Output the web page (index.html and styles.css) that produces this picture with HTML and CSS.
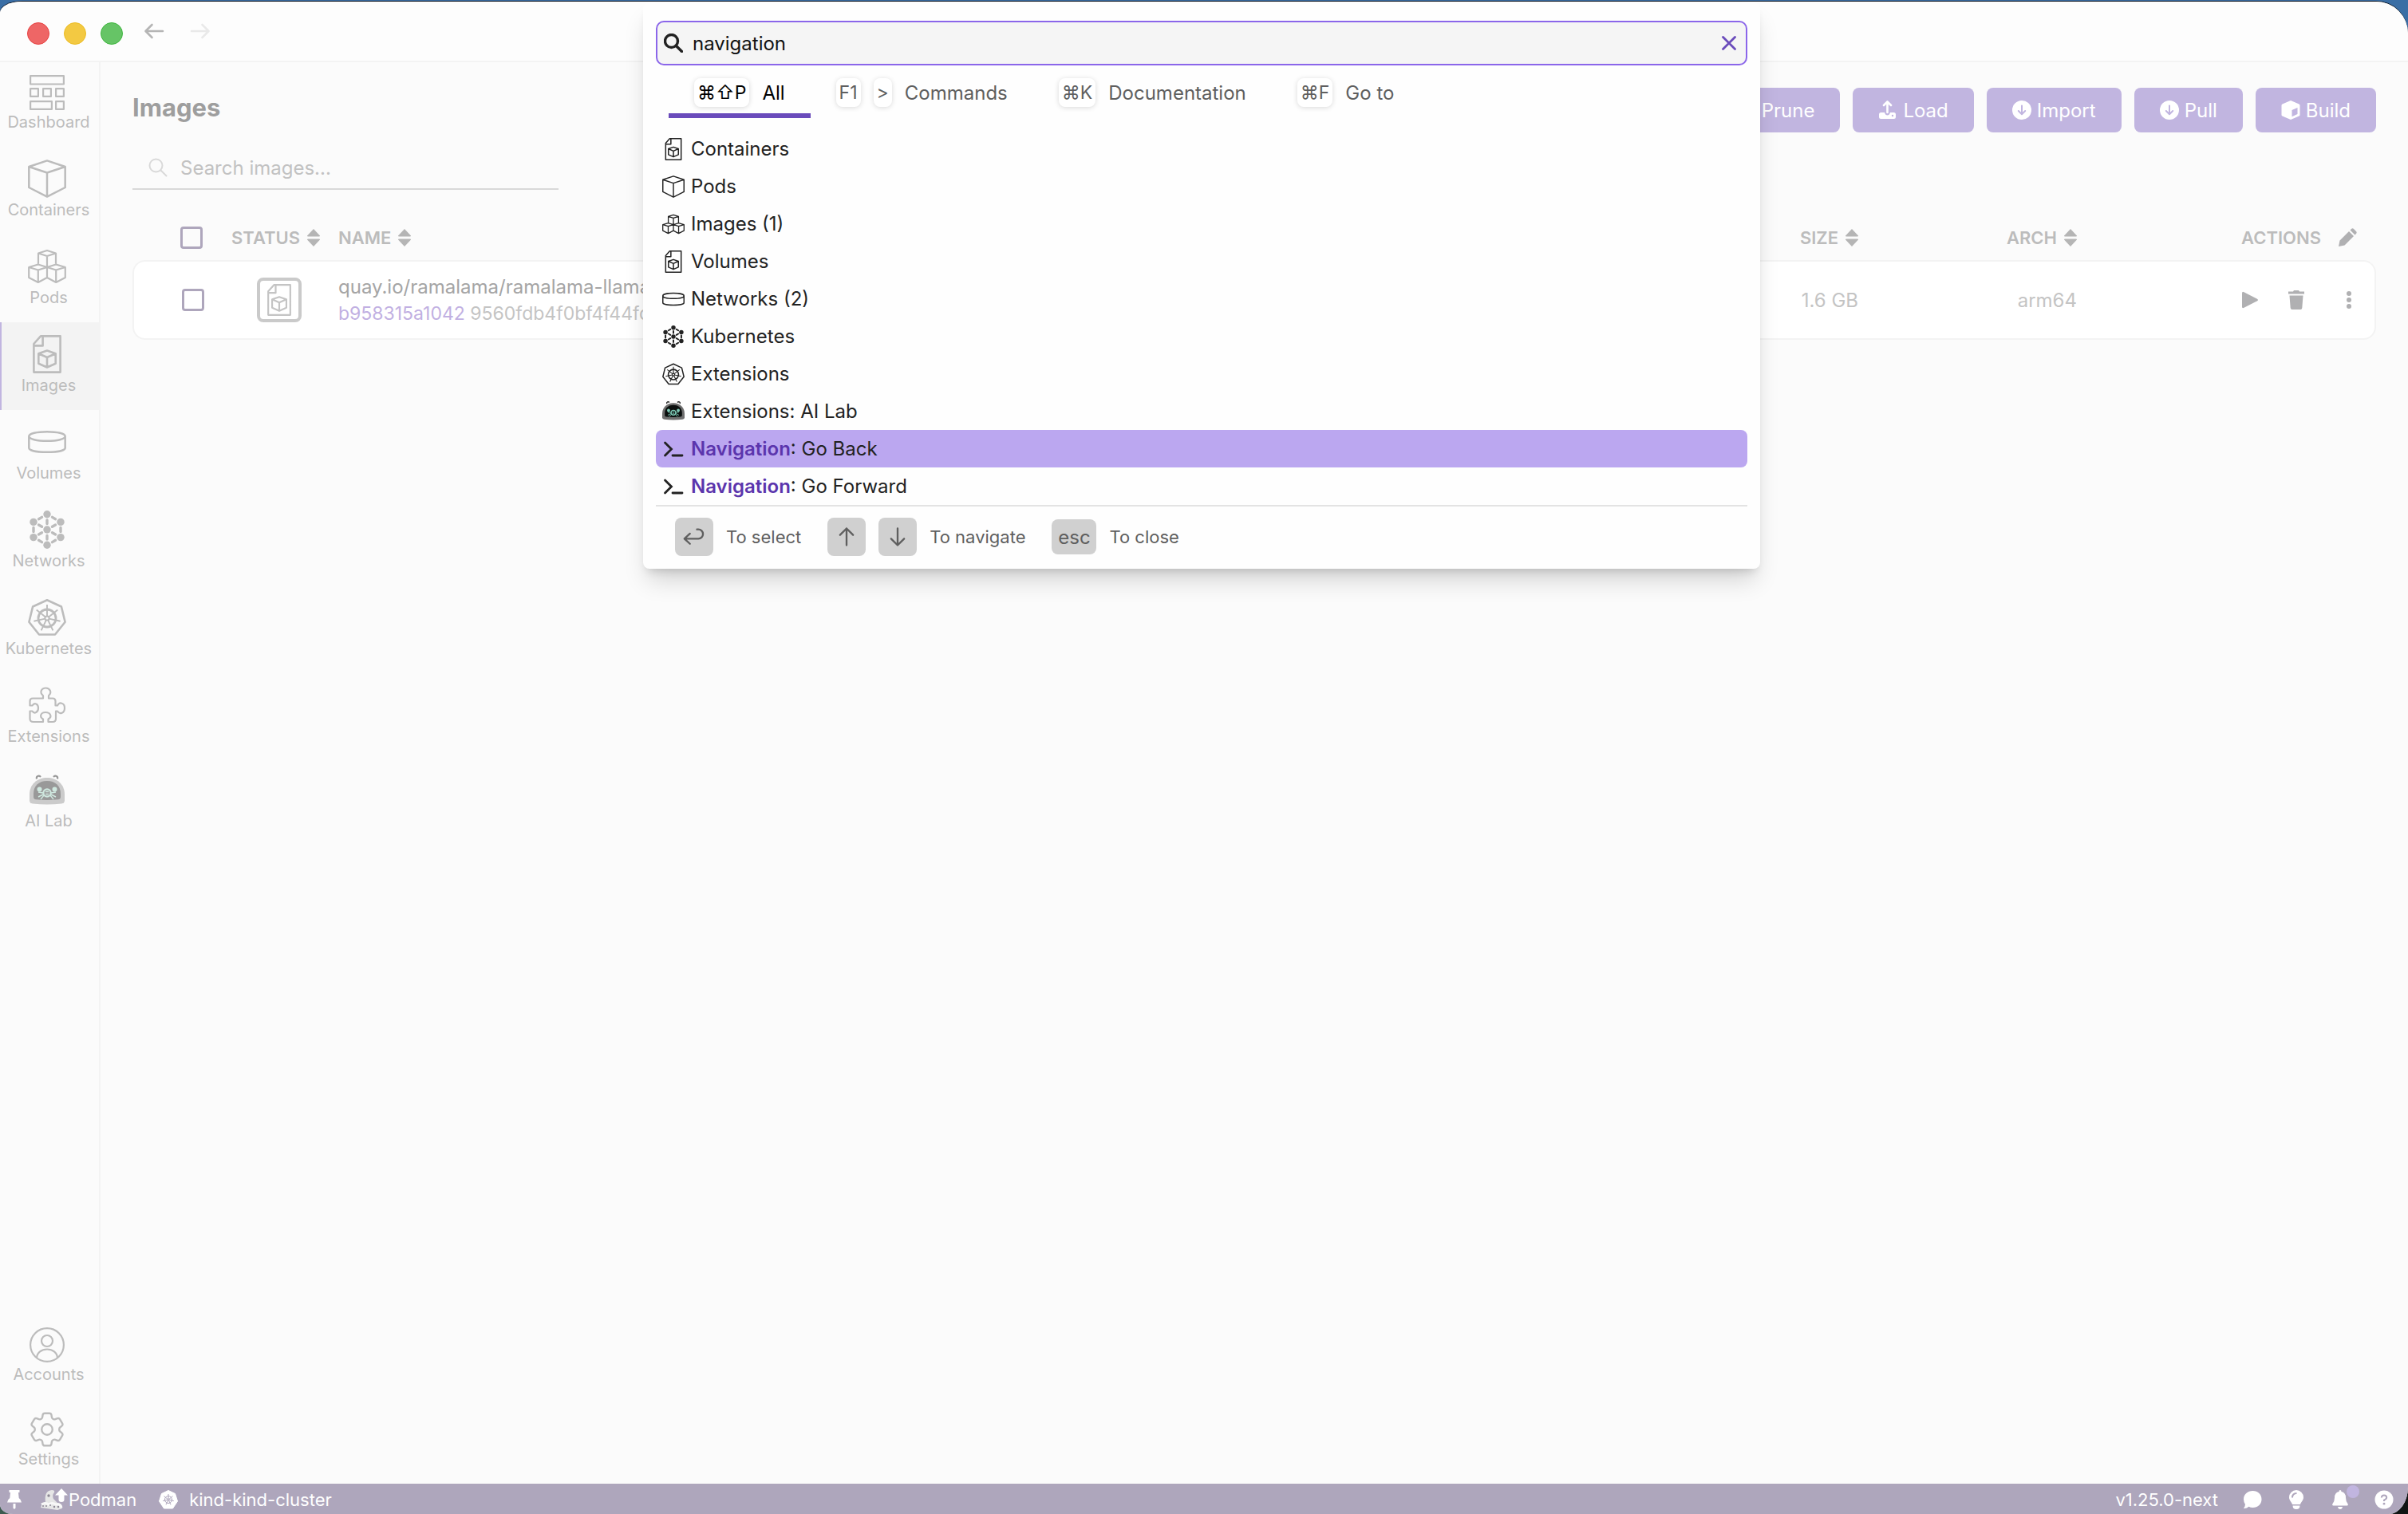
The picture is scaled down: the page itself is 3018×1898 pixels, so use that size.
FILE: index.html
```
<!DOCTYPE html>
<html lang="en">
<head>
  <meta charset="UTF-8">
  <meta name="viewport" content="width=device-width, initial-scale=1">
  <title>Podman Desktop</title>
  <link rel="stylesheet" href="styles.css">
</head>
<body>
  <!-- Icon sprite -->
  <svg class="sprite" aria-hidden="true">
    <symbol id="i-dashboard" viewBox="0 0 44 44">
      <g fill="none" stroke="currentColor" stroke-width="2.2" stroke-linejoin="round">
        <rect x="1.1" y="1.1" width="41.8" height="10.4"/>
        <rect x="1.1" y="17.1" width="9.8" height="9.8"/><rect x="17.1" y="17.1" width="9.8" height="9.8"/><rect x="33.1" y="17.1" width="9.8" height="9.8"/>
        <rect x="1.1" y="33.1" width="26.8" height="9.8"/><rect x="33.1" y="33.1" width="9.8" height="9.8"/>
      </g>
    </symbol>
    <symbol id="i-cube" viewBox="0 0 48 48">
      <path d="M24 1.4 46.7 9v26L24 46.6 1.3 35V9ZM1.3 9 24 16.5 46.7 9M24 16.5v30" fill="none" stroke="currentColor" stroke-width="2.5" stroke-linejoin="round"/>
    </symbol>
    <symbol id="i-pods" viewBox="0 0 48 48">
      <path d="M13 20.5V7.5L24 4l11 3.5v13M13 7.5 24 11l11-3.5M24 11v14M1.2 25l11.6-3.5L24 25v13l-11.2 6L1.2 38ZM1.2 25l11.6 3.5L24 25M12.8 28.5V44M24 25l11.2-3.5L46.8 25v13l-11.6 6L24 38M24 25l11.2 3.5L46.8 25M35.2 28.5V44" fill="none" stroke="currentColor" stroke-width="2.2" stroke-linejoin="round"/>
    </symbol>
    <symbol id="i-image" viewBox="0 0 48 48">
      <path d="M16 1.4h24.6v45.2H7.4V11ZM7.4 13.4h11.2V1.4M24 19.5l10.7 3.7v12.5L24 40.5l-10.7-4.8V23.2ZM13.3 23.2 24 28l10.7-4.8M24 28v12.5" fill="none" stroke="currentColor" stroke-width="2.6" stroke-linejoin="round"/>
    </symbol>
    <symbol id="i-volume" viewBox="0 0 48 48">
      <path d="M1.3 17c0-3.5 10-5.7 22.7-5.7s22.7 2.2 22.7 5.7S36.7 22.7 24 22.7 1.3 20.5 1.3 17v14.5c0 3.2 10 5.3 22.7 5.3s22.7-2.1 22.7-5.3V17" fill="none" stroke="currentColor" stroke-width="2.5"/>
    </symbol>
    <symbol id="i-network" viewBox="0 0 48 48">
      <g fill="currentColor"><circle cx="24" cy="4.7" r="4.7"/><circle cx="7" cy="14.4" r="4.7"/><circle cx="41" cy="14.4" r="4.7"/><circle cx="24" cy="24" r="4.7"/><circle cx="7" cy="33.6" r="4.7"/><circle cx="41" cy="33.6" r="4.7"/><circle cx="24" cy="43.3" r="4.7"/></g>
      <path d="M13.5 10.7l4-2.3M34.5 10.7l-4-2.3M13.5 37.3l4 2.3M34.5 37.3l-4 2.3M7 21.5v5M41 21.5v5M24 12v4.5M24 31.5V36M13.5 18l4 2.3M34.5 18l-4 2.3M13.5 30l4-2.3M34.5 30l-4-2.3" stroke="currentColor" stroke-width="3.4" stroke-linecap="round"/>
    </symbol>
    <symbol id="i-kube" viewBox="0 0 48 48">
      <g fill="none" stroke="currentColor">
        <path d="M24 2.2 41.9 10.5 46.6 29.7 34 45.5H14L1.4 29.7 6.1 10.5Z" stroke-width="2.6" stroke-linejoin="round"/>
        <circle cx="24" cy="25" r="11" stroke-width="2.8"/>
        <circle cx="24" cy="25" r="2.6" stroke-width="2"/>
        <path d="M24 22.4V8M26 23.4 37.3 14.4M26.5 25.6 40.6 28.8M25.1 27.3 31.4 40.3M22.9 27.3 16.6 40.3M21.5 25.6 7.4 28.8M22 23.4 10.7 14.4" stroke-width="1.9"/>
      </g>
    </symbol>
    <symbol id="i-puzzle" viewBox="0 0 48 48">
      <path d="M19 15.5V12C14 8 17 2.5 22.3 2.5S30.5 8 26 12v3.5h5q3.5 0 3.5 3.5v5.5H37c2.5-5 9-3.5 9 3s-6 9-9 4h-2V41q0 4-4 4h-5.5v-3.5C31 38.5 28 33 22 33s-8 5.5-3 8.500V45H7q-4.5 0-4.5-4v-9.5h3c2.5 4 7.5 1.5 7.5-4s-5-7-7.5-3h-3V19q0-3.5 3.5-3.5Z" fill="none" stroke="currentColor" stroke-width="2.2" stroke-linejoin="round"/>
    </symbol>
    <symbol id="i-ailab" viewBox="0 0 44 44">
      <path d="M9 6.5C8 3 12 1.5 14 4M35 6.5C36 3 32 1.5 30 4" fill="none" stroke="var(--ear)" stroke-width="2.2"/>
      <path d="M0 26C0 13 10 5 22 5s22 8 22 21v7.5q0 3.5-4 4Q22 39.5 4 37.5q-4-.5-4-4Z" fill="var(--shell)"/>
      <path d="M5 25C5 15 12 9 22 9s17 6 17 16v4q0 3-3 3.3-14 1.2-28 0-3-.3-3-3.3Z" fill="var(--visor)"/>
      <g stroke="var(--glow)" fill="none" stroke-width="1.4"><circle cx="22" cy="24" r="4.6" stroke-width="2.2"/><path d="M20 22.5h4M20 25.5h4M17 24l-6-1M17 26l-6 3M18 27l-4 5M27 24l6-1M27 26l6 3M26 27l4 5"/></g>
      <circle cx="12.5" cy="19.5" r="3" fill="var(--glow)"/><circle cx="31.5" cy="19.5" r="3" fill="var(--glow)"/>
    </symbol>
    <symbol id="i-account" viewBox="0 0 44 44">
      <g fill="none" stroke="currentColor" stroke-width="2.2"><circle cx="22" cy="22" r="20.9"/><circle cx="22" cy="17" r="7"/><path d="M9 38c.5-6.5 6-10.5 13-10.5S34.500 31.5 35 38"/></g>
    </symbol>
    <symbol id="i-gear" viewBox="2.25 2.25 19.5 19.5">
      <g fill="none" stroke="currentColor" stroke-width="1.05"><path d="M9.594 3.94c.09-.542.56-.94 1.11-.94h2.593c.55 0 1.02.398 1.11.94l.213 1.281c.063.374.313.686.645.87.074.04.147.083.22.127.325.196.72.257 1.075.124l1.217-.456a1.125 1.125 0 0 1 1.37.49l1.296 2.247a1.125 1.125 0 0 1-.26 1.431l-1.003.827c-.293.241-.438.613-.43.992a7.723 7.723 0 0 1 0 .255c-.008.378.137.75.43.991l1.004.827c.424.35.534.955.26 1.43l-1.298 2.247a1.125 1.125 0 0 1-1.369.491l-1.217-.456c-.355-.133-.75-.072-1.076.124a6.47 6.47 0 0 1-.22.128c-.331.183-.581.495-.644.869l-.213 1.281c-.09.543-.56.94-1.11.94h-2.594c-.55 0-1.019-.398-1.11-.94l-.213-1.281c-.062-.374-.312-.686-.644-.87a6.52 6.52 0 0 1-.22-.127c-.325-.196-.72-.257-1.076-.124l-1.217.456a1.125 1.125 0 0 1-1.369-.49l-1.297-2.247a1.125 1.125 0 0 1 .26-1.431l1.004-.827c.292-.24.437-.613.43-.991a6.932 6.932 0 0 1 0-.255c.007-.38-.138-.751-.43-.992l-1.004-.827a1.125 1.125 0 0 1-.26-1.43l1.297-2.247a1.125 1.125 0 0 1 1.37-.491l1.216.456c.356.133.751.072 1.076-.124.072-.044.146-.086.22-.128.332-.183.582-.495.644-.869l.214-1.28Z"/><circle cx="12" cy="12" r="3"/></g>
    </symbol>
    <symbol id="i-search" viewBox="0 0 24 24">
      <circle cx="9.5" cy="9.5" r="8" fill="none" stroke="currentColor" stroke-width="var(--sw)"/><path d="M15.5 15.5 22.5 22.5" stroke="currentColor" stroke-width="var(--sw)" stroke-linecap="round"/>
    </symbol>
    <symbol id="i-arrow" viewBox="0 0 24 24">
      <path d="M23 12H2M9.5 4 1.5 12l8 8" fill="none" stroke="currentColor" stroke-width="var(--sw)" stroke-linecap="round" stroke-linejoin="round"/>
    </symbol>
    <symbol id="i-sort" viewBox="0 0 16 22">
      <path d="M8 0 16 8.5q.3 1-1 1H1q-1.3 0-1-1ZM8 22l8-8.500q.3-1-1-1H1q-1.3 0-1 1Z" fill="currentColor"/>
    </symbol>
    <symbol id="i-prompt" viewBox="0 0 28 28">
      <path d="M3.5 6 11.500 14l-8 8M13 22h12" fill="none" stroke="currentColor" stroke-width="2.8" stroke-linecap="round"/>
    </symbol>
    <symbol id="i-down" viewBox="0 0 24 24">
      <circle cx="12" cy="12" r="12" fill="currentColor"/>
      <path d="M12 6.500v10.500M7.800 13l4.200 4.200 4.200-4.200" fill="none" stroke="#c1b5e0" stroke-width="2" stroke-linecap="round" stroke-linejoin="round"/>
    </symbol>
  </svg>

  <div class="window">
    <header class="titlebar">
      <span class="light red"></span>
      <span class="light yellow"></span>
      <span class="light green"></span>
      <button class="nav-arrow" aria-label="Back"><svg><use href="#i-arrow"/></svg></button>
      <button class="nav-arrow forward" aria-label="Forward"><svg><use href="#i-arrow"/></svg></button>
    </header>

    <div class="body">
      <nav class="sidebar">
        <a href="#" class="nav-item small"><svg><use href="#i-dashboard"/></svg><span>Dashboard</span></a>
        <a href="#" class="nav-item"><svg><use href="#i-cube"/></svg><span>Containers</span></a>
        <a href="#" class="nav-item"><svg><use href="#i-pods"/></svg><span>Pods</span></a>
        <a href="#" class="nav-item active"><svg><use href="#i-image"/></svg><span>Images</span></a>
        <a href="#" class="nav-item"><svg><use href="#i-volume"/></svg><span>Volumes</span></a>
        <a href="#" class="nav-item"><svg><use href="#i-network"/></svg><span>Networks</span></a>
        <a href="#" class="nav-item"><svg><use href="#i-kube"/></svg><span>Kubernetes</span></a>
        <a href="#" class="nav-item"><svg><use href="#i-puzzle"/></svg><span>Extensions</span></a>
        <a href="#" class="nav-item small"><svg><use href="#i-ailab"/></svg><span>AI Lab</span></a>
        <div class="spacer"></div>
        <a href="#" class="nav-item small"><svg><use href="#i-account"/></svg><span>Accounts</span></a>
        <a href="#" class="nav-item small"><svg><use href="#i-gear"/></svg><span>Settings</span></a>
      </nav>

      <main class="page">
        <div class="page-header">
          <h1>Images</h1>
          <div class="actions">
            <button class="btn">Prune</button>
            <button class="btn"><svg viewBox="0 0 24 24"><path d="M11.5 15V2M7 6l4.500-4.500L16 6" fill="none" stroke="currentColor" stroke-width="2.6" stroke-linecap="round" stroke-linejoin="round"/><path d="M3.500 15H8q1 3.500 3.500 3.500T15 15h4.500q2.500 0 2.500 2.500v3q0 2.500-2.500 2.500h-16Q1 23 1 20.500v-3Q1 15 3.500 15Z" fill="currentColor"/><circle cx="18" cy="19" r="1.200" fill="#c1b5e0"/></svg>Load</button>
            <button class="btn"><svg><use href="#i-down"/></svg>Import</button>
            <button class="btn"><svg><use href="#i-down"/></svg>Pull</button>
            <button class="btn"><svg viewBox="0 0 24 24"><path fill-rule="evenodd" d="M12 0 22.5 4.500q1 .5 1 1.500v12q0 1-1 1.500L12 24 1.500 19.500q-1-.5-1-1.500V6q0-1 1-1.500ZM13.500 12v8.200l7-3.200V9Z" fill="currentColor"/></svg>Build</button>
          </div>
        </div>

        <label class="search">
          <svg><use href="#i-search"/></svg>
          <input type="text" placeholder="Search images..." aria-label="Search images">
        </label>

        <table class="images">
          <colgroup>
            <col class="c-check"><col class="c-status"><col><col class="c-size"><col class="c-arch"><col class="c-actions">
          </colgroup>
          <thead>
            <tr>
              <th class="check"><input type="checkbox" aria-label="Select all"></th>
              <th>STATUS<svg class="sort"><use href="#i-sort"/></svg></th>
              <th>NAME<svg class="sort"><use href="#i-sort"/></svg></th>
              <th class="right">SIZE<svg class="sort"><use href="#i-sort"/></svg></th>
              <th class="right">ARCH<svg class="sort"><use href="#i-sort"/></svg></th>
              <th class="right last">ACTIONS<svg class="pencil" viewBox="0 0 24 24"><path d="M1 23 2.500 15.500 14 4l6 6L8.500 21.500ZM15.500 2.500 17 1q1.500-1.300 3 0l3 3q1.300 1.500 0 3l-1.500 1.500Z" fill="currentColor"/></svg></th>
            </tr>
          </thead>
          <tbody>
            <tr>
              <td class="check"><input type="checkbox" aria-label="Select image"></td>
              <td><span class="status"><svg><use href="#i-image"/></svg></span></td>
              <td>
                <div class="name">quay.io/ramalama/ramalama-llama</div>
                <div class="digest"><span class="id">b958315a1042</span> 9560fdb4f0bf4f44fd</div>
              </td>
              <td class="right">1.6 GB</td>
              <td class="right">arm64</td>
              <td class="last">
                <div class="row-actions">
                  <button aria-label="Run"><svg viewBox="0 0 24 24"><path d="M2 3.500Q2 1 4.500 2.200L21 10.700q2 1.300 0 2.600L4.500 21.800Q2 23 2 20.500Z" fill="currentColor"/></svg></button>
                  <button aria-label="Delete"><svg viewBox="0 0 24 24"><path d="M9 0h6l1 1.500h6V4.500H2V1.500h6ZM3.500 6.500h17L19.300 22q-.2 2-2 2H6.700q-1.800 0-2-2Z" fill="currentColor"/></svg></button>
                  <button class="more" aria-label="More"><svg viewBox="0 0 24 24"><g fill="currentColor"><circle cx="12" cy="4" r="3"/><circle cx="12" cy="12" r="3"/><circle cx="12" cy="20" r="3"/></g></svg></button>
                </div>
              </td>
            </tr>
          </tbody>
        </table>
      </main>
    </div>

    <footer class="statusbar">
      <button class="pin" aria-label="Pin"><svg viewBox="0 0 24 24"><path d="M5.500 0h13v3h-1.500l.7 7q3 2 3.300 5.500H3Q3.300 12 6.300 10L7 3H5.500ZM10.500 17h3v5.500L12 24l-1.500-1.500Z" fill="currentColor"/></svg></button>
      <button class="provider">
        <svg viewBox="0 0 36 28">
          <path d="M1 24Q3 17 7 17 5 3 15 2q4 0 3 3-3 3-1 8 3 3 5 5 5 0 6 7l-6 2Z" fill="#e6e6e6"/>
          <path d="M2 20q5-3 9 0 4-3 9 0 6-1 7 4" fill="none" stroke="#f8f8f8" stroke-width="3"/>
          <g fill="#8c8794"><circle cx="11" cy="9" r="1.700"/><circle cx="4" cy="22" r="1"/><circle cx="8" cy="22" r="1"/><circle cx="13" cy="21" r="1"/><circle cx="18" cy="23" r="1.200"/><circle cx="23" cy="23" r="1.200"/></g>
          <path d="M27 0 35 8.500h-4.500V14q0 3-3.500 3t-3.500-3V8.500H19Z" fill="#fff"/>
        </svg>Podman
      </button>
      <button class="context">
        <svg viewBox="0 0 24 24"><path d="M12 .5 20.500 4.500 23.500 14 17.500 23h-11L.5 14 3.500 4.500Z" fill="#fff" stroke="#fff" stroke-linejoin="round"/><g fill="none" stroke="#aea6bc" stroke-width="1"><circle cx="12" cy="12" r="4.500"/><circle cx="12" cy="12" r="1"/><path d="M12 5v6M17.500 7.600 13 11.300M18.800 13.600 13 12.200M15 18.300 12.500 13M9 18.300 11.500 13M5.200 13.600 11 12.200M6.500 7.600 11 11.300"/></g></svg>kind-kind-cluster
      </button>
      <span class="spacer"></span>
      <span class="version">v1.25.0-next</span>
      <button class="tool" aria-label="Feedback"><svg viewBox="0 0 24 24"><path d="M12.500 1C19 1 23.500 5.500 23.500 11.500S19 22 12.500 22q-3 0-5-1.200Q4.500 23.500 .8 23q2-2 2.200-5Q1 15 1 11.500C1 5.500 6 1 12.500 1Z" fill="currentColor"/></svg></button>
      <button class="tool" aria-label="Tips"><svg viewBox="0 0 24 24"><path fill-rule="evenodd" d="M12 0a9 9 0 0 1 9 9c0 4-3 5.500-4 9H7C6 14.500 3 13 3 9a9 9 0 0 1 9-9ZM6 9.500h2Q8 5 12.500 5V3Q6 3 6 9.500ZM7.500 19.500h9q0 4.500-4.500 4.500t-4.500-4.500Z" fill="currentColor"/></svg></button>
      <button class="tool" aria-label="Notifications"><svg viewBox="0 0 24 24"><path d="M12 0q1.500 0 1.500 2Q19 3 19 9.500q0 5 2.700 8 .7 2-1 2H3.300q-1.700 0-1-2Q5 14.500 5 9.500 5 3 10.500 2 10.500 0 12 0ZM9 21h6q-.5 3-3 3t-3-3Z" fill="currentColor"/></svg><span class="dot"></span></button>
      <button class="tool" aria-label="Help"><svg viewBox="0 0 24 24"><circle cx="12" cy="12" r="11.500" fill="currentColor"/><path d="M8.800 9.500Q9 6.500 12 6.500t3.200 2.800Q15.200 11 12 12.700V14" fill="none" stroke="#aea6bc" stroke-width="2"/><circle cx="12" cy="17.200" r="1.400" fill="#aea6bc"/></svg></button>
    </footer>
  </div>

  <div class="palette" role="dialog" aria-label="Command palette">
    <label class="palette-input">
      <svg><use href="#i-search"/></svg>
      <input type="text" value="navigation" aria-label="Search">
      <button aria-label="Clear"><svg viewBox="0 0 18 18"><path d="M1.500 1.500l15 15M16.500 1.500l-15 15" stroke="currentColor" stroke-width="2.800" stroke-linecap="round"/></svg></button>
    </label>

    <div class="tabs">
      <button class="tab selected"><kbd>⌘⇧P</kbd>All</button>
      <button class="tab"><kbd>F1</kbd><kbd>&gt;</kbd>Commands</button>
      <button class="tab"><kbd>⌘K</kbd>Documentation</button>
      <button class="tab"><kbd>⌘F</kbd>Go to</button>
    </div>

    <ul class="results">
      <li><button><svg><use href="#i-image"/></svg>Containers</button></li>
      <li><button><svg><use href="#i-cube"/></svg>Pods</button></li>
      <li><button><svg><use href="#i-pods"/></svg>Images (1)</button></li>
      <li><button><svg><use href="#i-image"/></svg>Volumes</button></li>
      <li><button><svg><use href="#i-volume"/></svg>Networks (2)</button></li>
      <li><button><svg><use href="#i-network"/></svg>Kubernetes</button></li>
      <li><button><svg><use href="#i-kube"/></svg>Extensions</button></li>
      <li><button><svg><use href="#i-ailab"/></svg>Extensions: AI Lab</button></li>
      <li><button class="selected"><svg><use href="#i-prompt"/></svg><span><mark>Navigation</mark>: Go Back</span></button></li>
      <li><button><svg><use href="#i-prompt"/></svg><span><mark>Navigation</mark>: Go Forward</span></button></li>
    </ul>

    <div class="hints">
      <div class="hint"><span class="key"><svg viewBox="0 0 24 24"><path d="M7.500 8.500 1.500 14l6 5.500M2 14h14.500a5 5 0 0 0 0-10H15" fill="none" stroke="currentColor" stroke-width="2" stroke-linecap="round" stroke-linejoin="round"/></svg></span>To select</div>
      <div class="hint"><span class="key"><svg viewBox="0 0 24 24"><path d="M12 21V3M5 10l7-7 7 7" fill="none" stroke="currentColor" stroke-width="2" stroke-linecap="round" stroke-linejoin="round"/></svg></span><span class="key"><svg viewBox="0 0 24 24"><path d="M12 3v18M5 14l7 7 7-7" fill="none" stroke="currentColor" stroke-width="2" stroke-linecap="round" stroke-linejoin="round"/></svg></span>To navigate</div>
      <div class="hint"><span class="key esc">esc</span>To close</div>
    </div>
  </div>
</body>
</html>
```
FILE: styles.css
```
* {
  box-sizing: border-box;
}
body {
  margin: 0;
  height: 100vh;
  padding-top: 2px;
  font-family: Inter, "Noto Sans", sans-serif;
  font-size: 24px;
  color: #bcbcbc;
  background: linear-gradient(to bottom, #3a6ea5 50%, transparent 50%),
    linear-gradient(to right, #3c5b50, #101514);
  background-size: 100% 200px, 100% 100%;
  background-repeat: no-repeat;
}
button {
  margin: 0;
  padding: 0;
  border: none;
  background: none;
  font: inherit;
  color: inherit;
  display: flex;
  align-items: center;
  cursor: pointer;
}
input {
  font: inherit;
  border: none;
  outline: none;
  background: none;
  padding: 0;
}
a {
  color: inherit;
  text-decoration: none;
}
svg {
  display: block;
  flex: none;
}
.sprite {
  position: absolute;
  width: 0;
  height: 0;
}
.spacer {
  flex: 1;
}

/* Window */
.window {
  height: 100%;
  display: flex;
  flex-direction: column;
  background: #fbfbfb;
  border-radius: 28px 40px 24px 16px / 14px 40px 34px 12px;
  box-shadow: 0 -1px 0 #0b1320;
  overflow: hidden;
}
.titlebar {
  height: 76px;
  flex: none;
  display: flex;
  align-items: center;
  gap: 18px;
  padding-left: 34px;
  background: #fdfdfd;
  border-bottom: 2px solid #f3f3f3;
}
.light {
  width: 28px;
  height: 28px;
  margin-top: 6px;
  border-radius: 50%;
  border: 1px solid;
}
.red {
  background: #ee6666;
  border-color: #e84343;
}
.yellow {
  background: #f3c942;
  border-color: #ecbc22;
}
.green {
  background: #66c466;
  border-color: #3fb73f;
}
.nav-arrow {
  margin-left: 8px;
  color: #b5b5b5;
  --sw: 2.6;
}
.nav-arrow svg {
  width: 26px;
  height: 24px;
}
.forward {
  margin-left: 14px;
  color: #e9e9e9;
  transform: scaleX(-1);
}
.body {
  flex: 1;
  display: flex;
  min-height: 0;
}

/* Sidebar */
.sidebar {
  width: 126px;
  flex: none;
  display: flex;
  flex-direction: column;
  border-right: 2px solid #f3f3f3;
  --ear: #999;
  --shell: #cbcbcb;
  --visor: #999;
  --glow: #cfe8df;
}
.nav-item {
  display: flex;
  flex-direction: column;
  align-items: center;
  padding: 16px 4px 16px 0;
  border-left: 2px solid transparent;
  font-size: 20px;
  line-height: 30px;
}
.nav-item svg {
  width: 48px;
  height: 48px;
  margin-right: 4px;
}
.nav-item.small svg {
  width: 44px;
  height: 44px;
}
.nav-item.active {
  background: #f3f3f3;
  border-left-color: #c1b5e0;
}

/* Page */
.page {
  flex: 1;
  padding: 32px 40px;
}
.page-header {
  display: flex;
  justify-content: space-between;
}
h1 {
  margin: 0;
  font-size: 31px;
  line-height: 50px;
  color: #9e9e9e;
}
.actions {
  display: flex;
  gap: 16px;
}
.btn {
  height: 56px;
  padding: 0 32px;
  gap: 7px;
  border-radius: 8px;
  background: #c1b5e0;
  color: #fff;
}
.btn svg {
  width: 24px;
  height: 24px;
}
.search {
  display: flex;
  align-items: center;
  gap: 16px;
  width: 534px;
  height: 54px;
  margin-top: 18px;
  padding-left: 20px;
  border-bottom: 2px solid #d9d9d9;
  color: #d9d9d9;
  --sw: 2;
}
.search svg {
  width: 24px;
  height: 24px;
}
.search input::placeholder {
  color: #c2c2c2;
}

/* Table */
.images {
  width: 100%;
  margin-top: 32px;
  table-layout: fixed;
  border-spacing: 0;
}
.c-check {
  width: 124px;
}
.c-status {
  width: 134px;
}
.c-size,
.c-arch {
  width: 274px;
}
.c-actions {
  width: 375px;
}
th {
  height: 56px;
  padding: 0;
  text-align: left;
  font-size: 22px;
  font-weight: 600;
}
th svg {
  display: inline-block;
  vertical-align: middle;
}
td {
  height: 100px;
  padding: 0;
  background: #fff;
  border: solid #f3f3f3;
  border-width: 2px 0;
  color: #c4c4c4;
}
td:first-child {
  border-left-width: 2px;
  border-radius: 16px 0 0 16px;
}
td:last-child {
  border-right-width: 2px;
  border-radius: 0 16px 16px 0;
}
.sort {
  width: 16px;
  height: 22px;
  margin: -4px 0 0 9px;
  color: #b5b5b5;
}
.pencil {
  width: 24px;
  height: 24px;
  margin: -4px 0 0 21px;
  color: #b0b0b2;
}
.right {
  text-align: right;
}
th.last {
  padding-right: 24px;
}
td.last {
  padding-right: 20px;
}
.check input {
  appearance: none;
  display: block;
  width: 28px;
  height: 28px;
  margin: 0 0 0 60px;
  border: 3px solid #aea6bc;
  border-radius: 4px;
}
.status {
  display: flex;
  align-items: center;
  justify-content: center;
  width: 56px;
  height: 56px;
  margin-left: 32px;
  border: 4px solid #cacaca;
  border-radius: 8px;
}
.status svg {
  width: 40px;
  height: 40px;
}
.name {
  line-height: 34px;
  color: #a5a5a5;
}
.digest {
  font-size: 23px;
  line-height: 32px;
}
.id {
  color: #c1b0e2;
}
.row-actions {
  display: flex;
  justify-content: flex-end;
  gap: 34px;
  color: #b0b0b2;
}
.row-actions svg {
  width: 24px;
  height: 24px;
}
.more {
  margin-left: 8px;
}

/* Status bar */
.statusbar {
  flex: none;
  height: 38px;
  display: flex;
  align-items: center;
  padding: 2px 18px 0 6px;
  background: #aea6bc;
  color: #fff;
  font-size: 22px;
}
.statusbar svg {
  width: 24px;
  height: 24px;
}
.provider {
  margin-left: 20px;
}
.provider svg {
  width: 36px;
  height: 28px;
}
.context {
  margin-left: 28px;
  gap: 14px;
}
.tool {
  position: relative;
  margin-left: 31px;
}
.dot {
  position: absolute;
  top: -6px;
  right: -12px;
  width: 16px;
  height: 16px;
  border-radius: 50%;
  background: #c1b5e0;
}

/* Command palette */
.palette {
  position: absolute;
  top: 3px;
  left: 50%;
  width: 1400px;
  margin-left: -703px;
  padding: 23px 16px 16px;
  background: #fefefe;
  border-radius: 8px;
  box-shadow: 0 20px 30px -6px rgba(0, 0, 0, 0.16), 0 8px 12px -6px rgba(0, 0, 0, 0.16);
  color: #222;
}
.palette-input {
  display: flex;
  align-items: center;
  gap: 12px;
  height: 56px;
  padding: 0 12px 0 8px;
  background: #f5f5f5;
  border: 2px solid #8b66ea;
  border-radius: 10px;
  --sw: 3.4;
}
.palette-input input {
  flex: 1;
  color: #111;
}
.palette-input svg {
  width: 24px;
  height: 24px;
}
.palette-input button {
  color: #6a4bbb;
}
.palette-input button svg {
  width: 18px;
  height: 18px;
}
.tabs {
  display: flex;
  gap: 32px;
  padding: 0 16px;
}
.tab {
  height: 66px;
  padding: 8px 0 0;
  border-bottom: 6px solid transparent;
  color: #5f5f5f;
  gap: 16px;
}
.tab:not(.selected) {
  margin-right: 32px;
}
.tab.selected {
  padding: 8px 32px 0;
  color: #000;
  border-bottom-color: #6a4bbb;
}
kbd {
  font: inherit;
  font-size: 23px;
  height: 36px;
  padding: 0 4px;
  line-height: 36px;
  border-radius: 8px;
  background: #fff;
  box-shadow: 0 1px 6px rgba(0, 0, 0, 0.15);
}
.results {
  list-style: none;
  margin: 15px 0 0;
  padding: 0;
  border-bottom: 2px solid #e3e3e3;
  --ear: #222;
  --shell: #6f6f6f;
  --visor: #0b0f0e;
  --glow: #7cc9b5;
}
.results button {
  width: 100%;
  height: 47px;
  padding: 0 8px;
  gap: 8px;
  border-radius: 8px;
}
.results button.selected {
  background: #bba7f0;
}
.results svg {
  width: 28px;
  height: 28px;
}
mark {
  background: none;
  color: #5b35ad;
  font-weight: 600;
}
.hints {
  display: flex;
  gap: 33px;
  margin-top: 14px;
  padding: 0 24px;
  font-size: 22px;
  color: #5f5f5f;
}
.hint {
  display: flex;
  align-items: center;
  gap: 16px;
}
.key {
  display: flex;
  align-items: center;
  justify-content: center;
  width: 48px;
  height: 48px;
  border-radius: 8px;
  background: #d0d0d0;
}
.key svg {
  width: 28px;
  height: 28px;
}
.key.esc {
  width: 56px;
  height: 44px;
  font-size: 24px;
}
```
